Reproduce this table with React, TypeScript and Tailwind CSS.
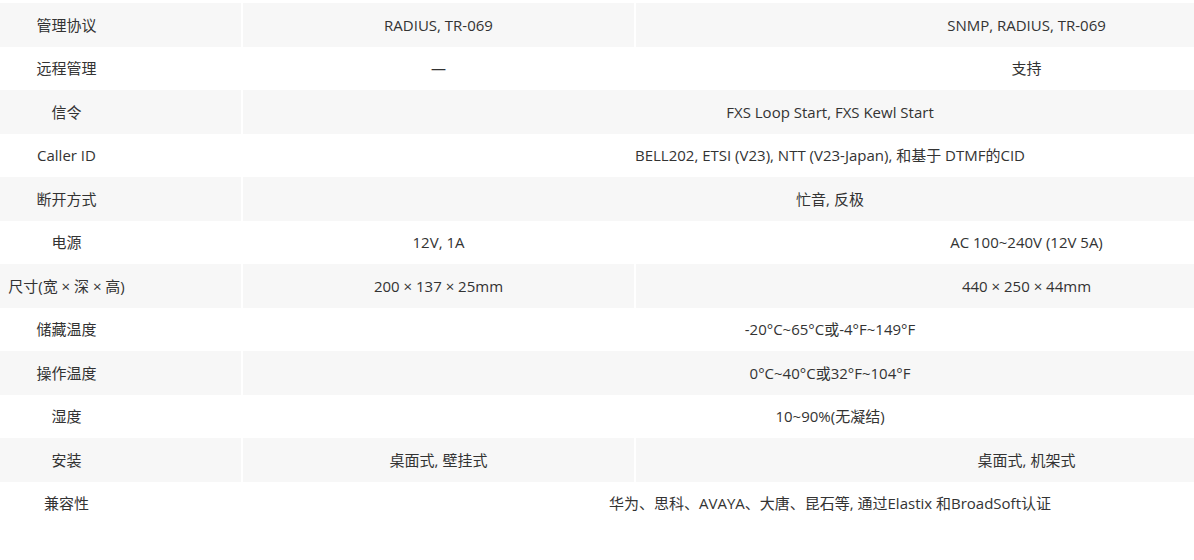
const ROWS: { label: string; cells: string[] }[] = [
  { label: "管理协议", cells: ["RADIUS, TR-069", "SNMP, RADIUS, TR-069"] },
  { label: "远程管理", cells: ["—", "支持"] },
  { label: "信令", cells: ["FXS Loop Start, FXS Kewl Start"] },
  { label: "Caller ID", cells: ["BELL202, ETSI (V23), NTT (V23-Japan), 和基于 DTMF的CID"] },
  { label: "断开方式", cells: ["忙音, 反极"] },
  { label: "电源", cells: ["12V, 1A", "AC 100~240V (12V 5A)"] },
  { label: "尺寸(宽 × 深 × 高)", cells: ["200 × 137 × 25mm", "440 × 250 × 44mm"] },
  { label: "储藏温度", cells: ["-20°C~65°C或-4°F~149°F"] },
  { label: "操作温度", cells: ["0°C~40°C或32°F~104°F"] },
  { label: "湿度", cells: ["10~90%(无凝结)"] },
  { label: "安装", cells: ["桌面式, 壁挂式", "桌面式, 机架式"] },
  { label: "兼容性", cells: ["华为、思科、AVAYA、大唐、昆石等, 通过Elastix 和BroadSoft认证"] },
];

export default function App() {
  return (
    <div className="w-[1194px] h-[560px] overflow-hidden bg-white pt-[3px] font-['Open_Sans','Noto_Sans_CJK_SC',sans-serif] text-[15px] text-[#333]">
      <table className="w-[1417px] table-fixed border-collapse">
        <colgroup>
          <col className="w-[242px]" />
          <col className="w-[393px]" />
          <col className="w-[782px]" />
        </colgroup>
        <tbody>
          {ROWS.map((row, i) => (
            <tr key={row.label} className={`h-[43.5px] ${i % 2 === 0 ? "bg-[#f7f7f7]" : "bg-white"}`}>
              <td className="border-r-2 border-white pr-[108px] text-center whitespace-nowrap">{row.label}</td>
              {row.cells.length === 2 ? (
                <>
                  <td className="border-r-2 border-white text-center">{row.cells[0]}</td>
                  <td className="text-center">{row.cells[1]}</td>
                </>
              ) : (
                <td colSpan={2} className="text-center">{row.cells[0]}</td>
              )}
            </tr>
          ))}
        </tbody>
      </table>
    </div>
  );
}
